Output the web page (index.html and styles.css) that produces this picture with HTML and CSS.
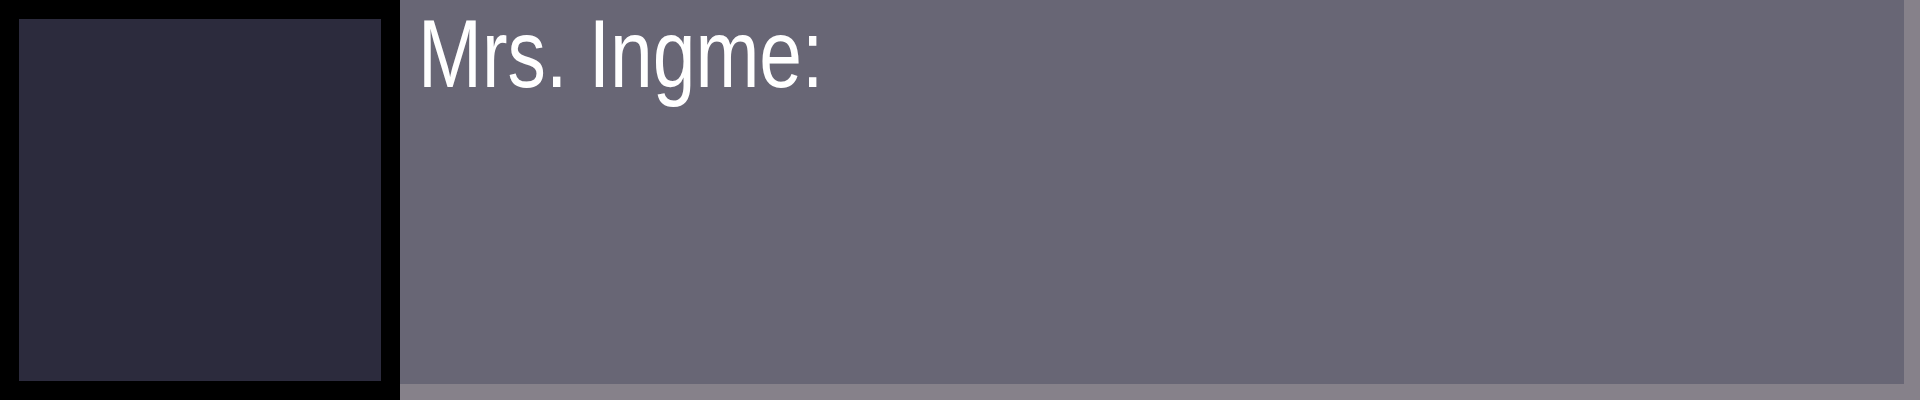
FILE: index.html
```html
<!DOCTYPE html>
<html>
<head>
<meta charset="utf-8">
<link rel="stylesheet" href="styles.css">
</head>
<body>
<div class="dialog">
  <div class="portrait-frame">
    <div class="portrait"></div>
  </div>
  <div class="textbox">
    <div class="speaker">Mrs. Ingme:</div>
  </div>
</div>
</body>
</html>
```
FILE: styles.css
```css
html, body {
  margin: 0;
  padding: 0;
  background: #000;
}
.dialog {
  display: flex;
  width: 1920px;
  height: 400px;
}
.portrait-frame {
  width: 400px;
  height: 400px;
  box-sizing: border-box;
  padding: 19px;
  background: #000;
}
.portrait {
  width: 362px;
  height: 362px;
  background: #2c2b3d;
}
.textbox {
  flex: 1;
  height: 400px;
  box-sizing: border-box;
  background: #686675;
  border-right: 16px solid #86818a;
  border-bottom: 16px solid #86818a;
  padding: 6px 0 0 18px;
}
.speaker {
  font-family: "Liberation Sans", Arial, sans-serif;
  font-size: 96px;
  line-height: 96px;
  color: #fff;
  white-space: nowrap;
  transform: scaleX(0.8);
  transform-origin: left top;
}
```
